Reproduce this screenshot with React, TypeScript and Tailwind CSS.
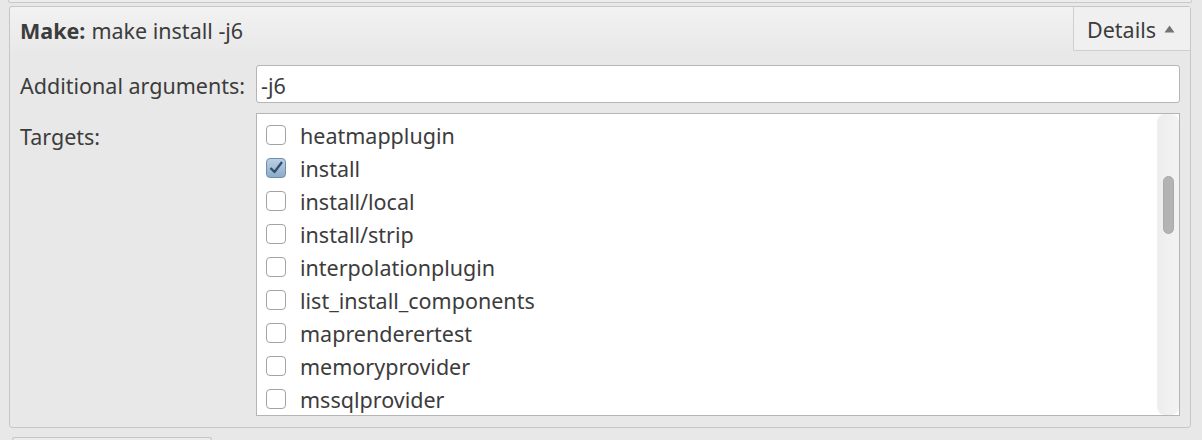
import React from 'react';

const targets = [
  { name: 'heatmapplugin', checked: false },
  { name: 'install', checked: true },
  { name: 'install/local', checked: false },
  { name: 'install/strip', checked: false },
  { name: 'interpolationplugin', checked: false },
  { name: 'list_install_components', checked: false },
  { name: 'maprenderertest', checked: false },
  { name: 'memoryprovider', checked: false },
  { name: 'mssqlprovider', checked: false },
];

const CheckBox: React.FC<{ checked: boolean }> = ({ checked }) =>
  checked ? (
    <span className="w-[20px] h-[20px] rounded-[4px] border border-[#6f8fae] bg-gradient-to-b from-[#bcd0e4] to-[#8eabc9] flex items-center justify-center shrink-0">
      <svg width="16" height="15" viewBox="0 0 16 15">
        <path d="M2.5 8 L6.5 12 L14 2" fill="none" stroke="#2f4f6f" strokeWidth="2.3" strokeLinejoin="round" />
      </svg>
    </span>
  ) : (
    <span className="w-[20px] h-[20px] rounded-[4px] border border-[#a3a3a3] bg-white shrink-0" />
  );

export default function App() {
  return (
    <div
      className="w-[1202px] h-[440px] bg-[#e8e8e8] overflow-hidden text-[#3c3c3c] text-[21.5px] leading-none"
      style={{ fontFamily: '"Noto Sans", "Open Sans", sans-serif' }}
    >
      {/* previous panel edge */}
      <div className="ml-[8px] mr-[10px] h-[3px] border-x border-b border-[#c9c9c9] rounded-b-[2px] bg-[#ececec]" />

      <div className="ml-[9px] mr-[11px] mt-[3px] h-[422px] border border-[#c6c6c6] rounded-[3px] bg-[#e8e8e8] flex flex-col">
        {/* header */}
        <div className="h-[48px] flex items-stretch justify-between bg-gradient-to-b from-[#f2f2f2] to-[#e9e9e9] rounded-t-[3px]">
          <div className="pl-[10px] pt-[3px] flex items-center">
            <span className="font-bold mr-[6px]">Make:</span>
            <span>make install -j6</span>
          </div>
          <div className="w-[117px] border-l border-b border-[#cfcfcf] rounded-bl-[2px] bg-[#f0f0f0] flex items-center pl-[13px] pt-[3px] gap-[8px]">
            <span>Details</span>
            <svg width="11" height="8" viewBox="0 0 11 8" className="mb-[2px]">
              <path d="M0.5 7.5 L5.5 0.5 L10.5 7.5 Z" fill="#737373" />
            </svg>
          </div>
        </div>

        {/* body */}
        <div className="flex-1 grid grid-cols-[246px_1fr] grid-rows-[38px_1fr] gap-y-[10px] pt-[14px] pr-[10px] pb-[11px]">
          <div className="pl-[10px] pt-[3px] flex items-center">Additional arguments:</div>
          <div className="border border-[#b5b5b5] rounded-[3px] bg-white flex items-center pl-[4px] pt-[3px]">-j6</div>

          <div className="pl-[10px] pt-[13px]">Targets:</div>
          <div className="border border-[#b5b5b5] bg-white flex overflow-hidden">
            <div className="flex-1 flex flex-col pt-[4px] pl-[9px]">
              {targets.map((t) => (
                <div key={t.name} className="h-[33px] flex items-center gap-[14px]">
                  <CheckBox checked={t.checked} />
                  <span className="pt-[3px]">{t.name}</span>
                </div>
              ))}
            </div>
            <div className="w-[22px] bg-gradient-to-r from-[#ededed] to-[#f3f3f3] border-l border-[#f0f0f0] rounded-[8px] relative">
              <div className="absolute left-[5px] top-[62px] w-[11px] h-[58px] rounded-full bg-[#b3b3b3] border border-[#a9a9a9]" />
            </div>
          </div>
        </div>
      </div>

      {/* next element edge */}
      <div className="ml-[12px] mt-[9px] w-[200px] h-[6px] border-t border-x border-[#c6c6c6] rounded-t-[3px] bg-[#ececec]" />
    </div>
  );
}
